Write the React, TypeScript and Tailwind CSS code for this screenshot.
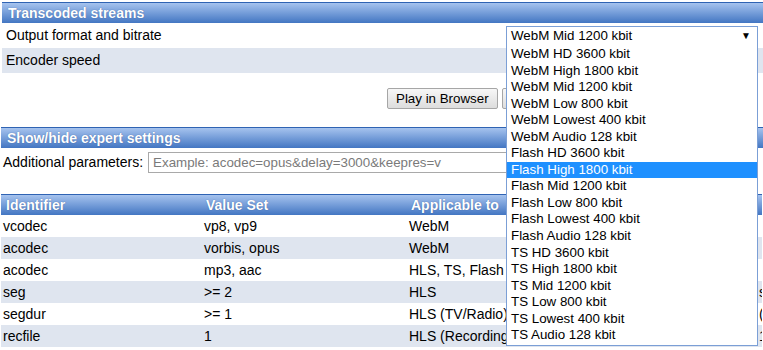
import React from 'react'

const FORMATS = [
  'WebM HD 3600 kbit',
  'WebM High 1800 kbit',
  'WebM Mid 1200 kbit',
  'WebM Low 800 kbit',
  'WebM Lowest 400 kbit',
  'WebM Audio 128 kbit',
  'Flash HD 3600 kbit',
  'Flash High 1800 kbit',
  'Flash Mid 1200 kbit',
  'Flash Low 800 kbit',
  'Flash Lowest 400 kbit',
  'Flash Audio 128 kbit',
  'TS HD 3600 kbit',
  'TS High 1800 kbit',
  'TS Mid 1200 kbit',
  'TS Low 800 kbit',
  'TS Lowest 400 kbit',
  'TS Audio 128 kbit',
]

const PARAMS = [
  ['vcodec', 'vp8, vp9', 'WebM', ''],
  ['acodec', 'vorbis, opus', 'WebM', ''],
  ['acodec', 'mp3, aac', 'HLS, TS, Flash', ''],
  ['seg', '>= 2', 'HLS', 'seconds'],
  ['segdur', '>= 1', 'HLS (TV/Radio)', '(minutes)'],
  ['recfile', '1', 'HLS (Recordings)', '1 = single file'],
]

function SectionHeader({ children, className }: { children: React.ReactNode; className?: string }) {
  return (
    <div
      className={
        'h-[21px] border-t border-[#2f63b3] bg-gradient-to-b from-[#a6c3ee] to-[#4376c2] text-white font-bold text-[14px] leading-[20px] pl-[6px] [text-shadow:0_0_1px_rgba(20,50,110,0.6)] ' +
        (className ?? '')
      }
    >
      {children}
    </div>
  )
}

function Button({ children }: { children: React.ReactNode }) {
  return (
    <button className="h-[21px] px-[8px] border border-[#a6a6a6] rounded-[2px] bg-gradient-to-b from-[#f7f7f7] to-[#dddddd] text-[13.33px] leading-[19px] text-black">
      {children}
    </button>
  )
}

export default function App() {
  return (
    <div className="relative w-[763px] h-[350px] overflow-hidden bg-white text-black text-[14px] font-['Liberation_Sans',Arial,sans-serif]">
      {/* Transcoded streams */}
      <div className="pt-[2px] pl-[2px]">
        <SectionHeader>Transcoded streams</SectionHeader>
        <div className="h-[25px] flex items-center justify-between pl-[4px] pr-[5px]">
          <span>Output format and bitrate</span>
          <div className="w-[252px] h-[19px] border border-[#7b9fd6] flex items-center justify-between pl-[4px] pr-[6px] text-[13.33px]">
            <span>WebM Mid 1200 kbit</span>
            <span className="text-[10px]">▼</span>
          </div>
        </div>
        <div className="h-[25px] flex items-center pl-[4px] bg-[#dfe5ef]">
          <span>Encoder speed</span>
        </div>
      </div>

      {/* Buttons */}
      <div className="mt-[15px] flex gap-[4px] pl-[387px]">
        <Button>Play in Browser</Button>
        <Button>Download</Button>
      </div>

      {/* Expert settings */}
      <div className="mt-[18px] pl-[1px]">
        <SectionHeader className="h-[20px] leading-[19px]">Show/hide expert settings</SectionHeader>
        <div className="h-[27px] flex items-center pl-[2px] pt-[2px]">
          <span className="mr-[5px]">Additional parameters:</span>
          <div className="w-[500px] h-[21px] border border-[#a9a9a9] flex items-center pl-[4px] text-[13.33px] text-[#7a7a7a]">
            Example: acodec=opus&amp;delay=3000&amp;keepres=v
          </div>
        </div>
      </div>

      {/* Parameters table */}
      <div className="mt-[19px] pl-[1px] w-[762px]">
        <div className="h-[21px] flex border-t border-[#2f63b3] bg-gradient-to-b from-[#a6c3ee] to-[#4376c2] text-white font-bold leading-[20px] [text-shadow:0_0_1px_rgba(20,50,110,0.6)]">
          <div className="w-[200px] pl-[5px]">Identifier</div>
          <div className="w-[205px] pl-[5px]">Value Set</div>
          <div className="w-[350px] pl-[5px]">Applicable to</div>
          <div className="flex-1" />
        </div>
        {PARAMS.map(([id, value, applies, desc], i) => (
          <div
            key={i}
            className={'h-[22px] flex items-center ' + (i % 2 === 1 ? 'bg-[#dfe5ef]' : 'bg-white')}
          >
            <div className="w-[200px] pl-[2px]">{id}</div>
            <div className="w-[205px] pl-[3px]">{value}</div>
            <div className="w-[350px] pl-[3px] whitespace-nowrap">{applies}</div>
            <div className="flex-1 overflow-hidden whitespace-nowrap pl-[3px]">{desc}</div>
          </div>
        ))}
      </div>

      {/* Open dropdown list */}
      <div className="absolute left-[506px] top-[44px] w-[252px] h-[302px] border border-t-0 border-[#7b9fd6] bg-white pt-[2px]">
        {FORMATS.map((f) => (
          <div
            key={f}
            className={
              'h-[16.56px] leading-[16.56px] pl-[4px] text-[13.33px] whitespace-nowrap ' +
              (f === 'Flash High 1800 kbit' ? 'bg-[#1e90ff] text-white' : 'text-black')
            }
          >
            {f}
          </div>
        ))}
      </div>
    </div>
  )
}
